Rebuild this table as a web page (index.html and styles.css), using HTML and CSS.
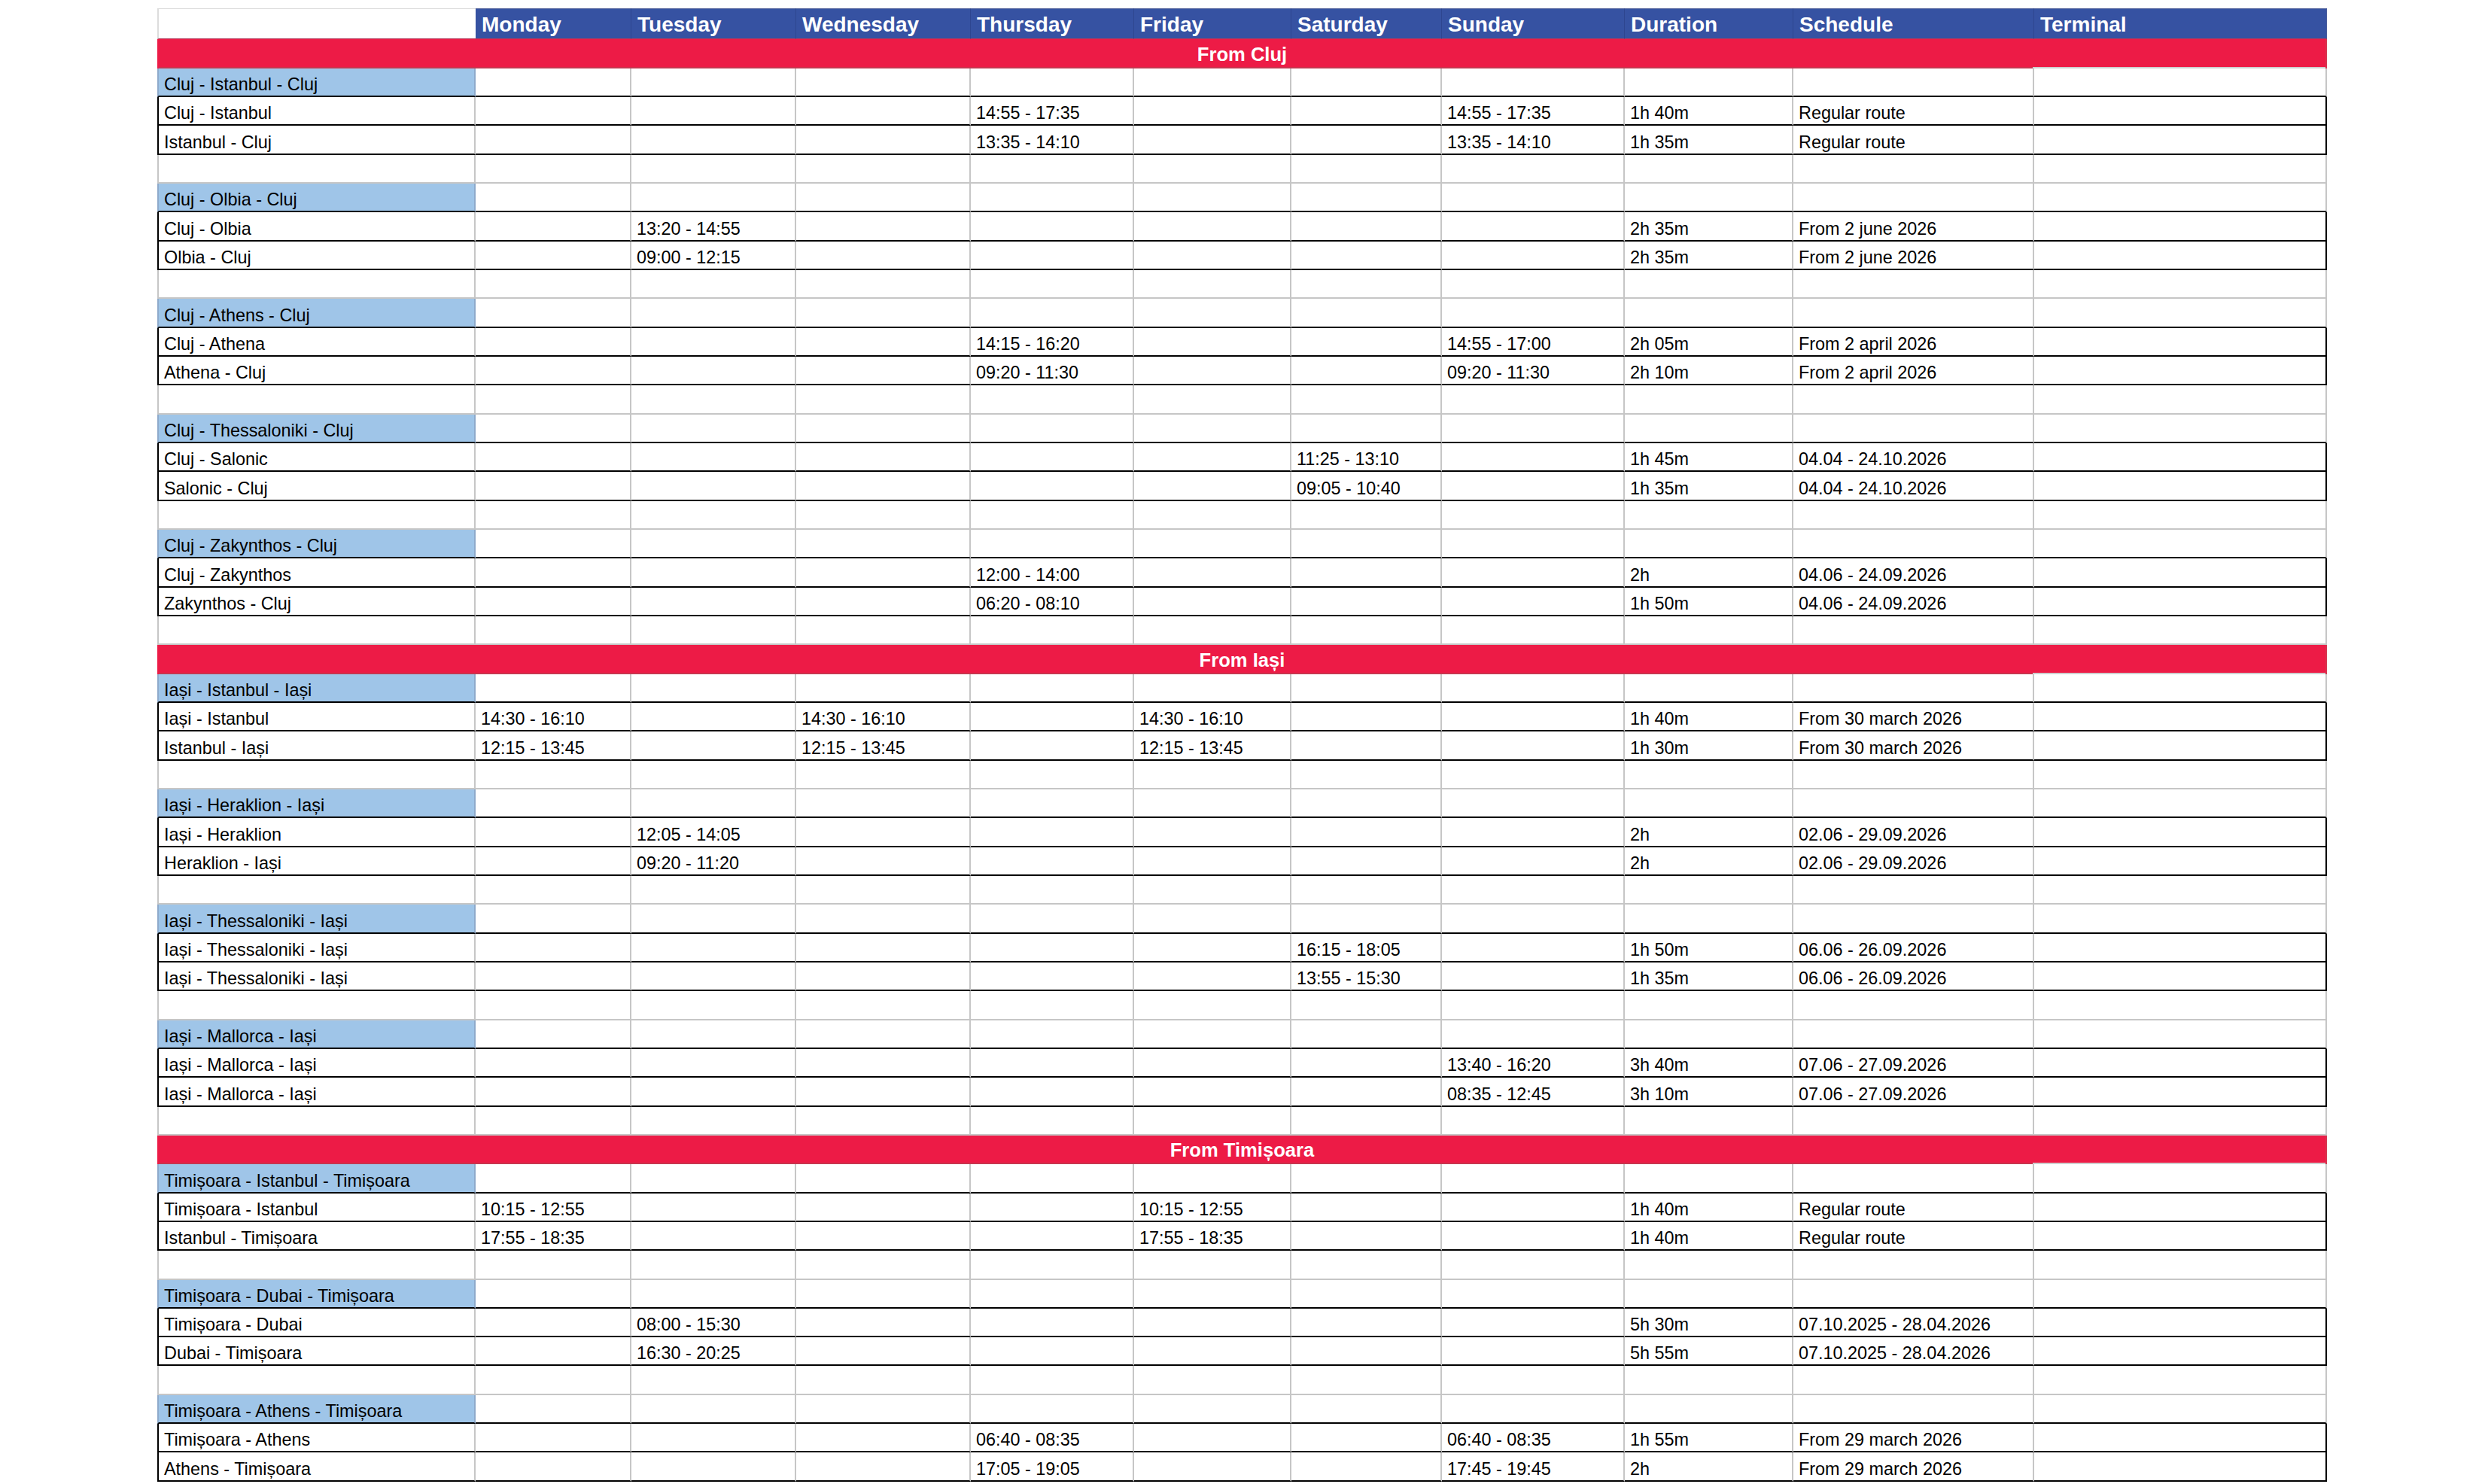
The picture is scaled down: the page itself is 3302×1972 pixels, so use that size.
FILE: index.html
```html
<!DOCTYPE html>
<html lang="en">
<head>
<meta charset="utf-8">
<title>Flight schedule</title>
<link rel="stylesheet" href="styles.css">
</head>
<body>
<div class="page">
<table class="sheet">
<colgroup>
<col class="c-route"><col class="c-mon"><col class="c-tue"><col class="c-wed"><col class="c-thu"><col class="c-fri"><col class="c-sat"><col class="c-sun"><col class="c-dur"><col class="c-sch"><col class="c-ter">
</colgroup>
<thead>
<tr class="head"><th class="corner"></th><th>Monday</th><th>Tuesday</th><th>Wednesday</th><th>Thursday</th><th>Friday</th><th>Saturday</th><th>Sunday</th><th>Duration</th><th>Schedule</th><th>Terminal</th></tr>
</thead>
<tbody>
<tr class="region"><td colspan="11">From Cluj</td></tr>

<tr class="group"><td class="route">Cluj - Istanbul - Cluj</td><td></td><td></td><td></td><td></td><td></td><td></td><td></td><td></td><td></td><td></td></tr>
<tr class="flight"><td>Cluj - Istanbul</td><td></td><td></td><td></td><td>14:55 - 17:35</td><td></td><td></td><td>14:55 - 17:35</td><td>1h 40m</td><td>Regular route</td><td></td></tr>
<tr class="flight"><td>Istanbul - Cluj</td><td></td><td></td><td></td><td>13:35 - 14:10</td><td></td><td></td><td>13:35 - 14:10</td><td>1h 35m</td><td>Regular route</td><td></td></tr>
<tr class="gap"><td></td><td></td><td></td><td></td><td></td><td></td><td></td><td></td><td></td><td></td><td></td></tr>

<tr class="group"><td class="route">Cluj - Olbia - Cluj</td><td></td><td></td><td></td><td></td><td></td><td></td><td></td><td></td><td></td><td></td></tr>
<tr class="flight"><td>Cluj - Olbia</td><td></td><td>13:20 - 14:55</td><td></td><td></td><td></td><td></td><td></td><td>2h 35m</td><td>From 2 june 2026</td><td></td></tr>
<tr class="flight"><td>Olbia - Cluj</td><td></td><td>09:00 - 12:15</td><td></td><td></td><td></td><td></td><td></td><td>2h 35m</td><td>From 2 june 2026</td><td></td></tr>
<tr class="gap"><td></td><td></td><td></td><td></td><td></td><td></td><td></td><td></td><td></td><td></td><td></td></tr>

<tr class="group"><td class="route">Cluj - Athens - Cluj</td><td></td><td></td><td></td><td></td><td></td><td></td><td></td><td></td><td></td><td></td></tr>
<tr class="flight"><td>Cluj - Athena</td><td></td><td></td><td></td><td>14:15 - 16:20</td><td></td><td></td><td>14:55 - 17:00</td><td>2h 05m</td><td>From 2 april 2026</td><td></td></tr>
<tr class="flight"><td>Athena - Cluj</td><td></td><td></td><td></td><td>09:20 - 11:30</td><td></td><td></td><td>09:20 - 11:30</td><td>2h 10m</td><td>From 2 april 2026</td><td></td></tr>
<tr class="gap"><td></td><td></td><td></td><td></td><td></td><td></td><td></td><td></td><td></td><td></td><td></td></tr>

<tr class="group"><td class="route">Cluj - Thessaloniki - Cluj</td><td></td><td></td><td></td><td></td><td></td><td></td><td></td><td></td><td></td><td></td></tr>
<tr class="flight"><td>Cluj - Salonic</td><td></td><td></td><td></td><td></td><td></td><td>11:25 - 13:10</td><td></td><td>1h 45m</td><td>04.04 - 24.10.2026</td><td></td></tr>
<tr class="flight"><td>Salonic - Cluj</td><td></td><td></td><td></td><td></td><td></td><td>09:05 - 10:40</td><td></td><td>1h 35m</td><td>04.04 - 24.10.2026</td><td></td></tr>
<tr class="gap"><td></td><td></td><td></td><td></td><td></td><td></td><td></td><td></td><td></td><td></td><td></td></tr>

<tr class="group"><td class="route">Cluj - Zakynthos - Cluj</td><td></td><td></td><td></td><td></td><td></td><td></td><td></td><td></td><td></td><td></td></tr>
<tr class="flight"><td>Cluj - Zakynthos</td><td></td><td></td><td></td><td>12:00 - 14:00</td><td></td><td></td><td></td><td>2h</td><td>04.06 - 24.09.2026</td><td></td></tr>
<tr class="flight"><td>Zakynthos - Cluj</td><td></td><td></td><td></td><td>06:20 - 08:10</td><td></td><td></td><td></td><td>1h 50m</td><td>04.06 - 24.09.2026</td><td></td></tr>
<tr class="gap"><td></td><td></td><td></td><td></td><td></td><td></td><td></td><td></td><td></td><td></td><td></td></tr>

<tr class="region"><td colspan="11">From Iași</td></tr>

<tr class="group"><td class="route">Iași - Istanbul - Iași</td><td></td><td></td><td></td><td></td><td></td><td></td><td></td><td></td><td></td><td></td></tr>
<tr class="flight"><td>Iași - Istanbul</td><td>14:30 - 16:10</td><td></td><td>14:30 - 16:10</td><td></td><td>14:30 - 16:10</td><td></td><td></td><td>1h 40m</td><td>From 30 march 2026</td><td></td></tr>
<tr class="flight"><td>Istanbul - Iași</td><td>12:15 - 13:45</td><td></td><td>12:15 - 13:45</td><td></td><td>12:15 - 13:45</td><td></td><td></td><td>1h 30m</td><td>From 30 march 2026</td><td></td></tr>
<tr class="gap"><td></td><td></td><td></td><td></td><td></td><td></td><td></td><td></td><td></td><td></td><td></td></tr>

<tr class="group"><td class="route">Iași - Heraklion - Iași</td><td></td><td></td><td></td><td></td><td></td><td></td><td></td><td></td><td></td><td></td></tr>
<tr class="flight"><td>Iași - Heraklion</td><td></td><td>12:05 - 14:05</td><td></td><td></td><td></td><td></td><td></td><td>2h</td><td>02.06 - 29.09.2026</td><td></td></tr>
<tr class="flight"><td>Heraklion - Iași</td><td></td><td>09:20 - 11:20</td><td></td><td></td><td></td><td></td><td></td><td>2h</td><td>02.06 - 29.09.2026</td><td></td></tr>
<tr class="gap"><td></td><td></td><td></td><td></td><td></td><td></td><td></td><td></td><td></td><td></td><td></td></tr>

<tr class="group"><td class="route">Iași - Thessaloniki - Iași</td><td></td><td></td><td></td><td></td><td></td><td></td><td></td><td></td><td></td><td></td></tr>
<tr class="flight"><td>Iași - Thessaloniki - Iași</td><td></td><td></td><td></td><td></td><td></td><td>16:15 - 18:05</td><td></td><td>1h 50m</td><td>06.06 - 26.09.2026</td><td></td></tr>
<tr class="flight"><td>Iași - Thessaloniki - Iași</td><td></td><td></td><td></td><td></td><td></td><td>13:55 - 15:30</td><td></td><td>1h 35m</td><td>06.06 - 26.09.2026</td><td></td></tr>
<tr class="gap"><td></td><td></td><td></td><td></td><td></td><td></td><td></td><td></td><td></td><td></td><td></td></tr>

<tr class="group"><td class="route">Iași - Mallorca - Iași</td><td></td><td></td><td></td><td></td><td></td><td></td><td></td><td></td><td></td><td></td></tr>
<tr class="flight"><td>Iași - Mallorca - Iași</td><td></td><td></td><td></td><td></td><td></td><td></td><td>13:40 - 16:20</td><td>3h 40m</td><td>07.06 - 27.09.2026</td><td></td></tr>
<tr class="flight"><td>Iași - Mallorca - Iași</td><td></td><td></td><td></td><td></td><td></td><td></td><td>08:35 - 12:45</td><td>3h 10m</td><td>07.06 - 27.09.2026</td><td></td></tr>
<tr class="gap"><td></td><td></td><td></td><td></td><td></td><td></td><td></td><td></td><td></td><td></td><td></td></tr>

<tr class="region"><td colspan="11">From Timișoara</td></tr>

<tr class="group"><td class="route">Timișoara - Istanbul - Timișoara</td><td></td><td></td><td></td><td></td><td></td><td></td><td></td><td></td><td></td><td></td></tr>
<tr class="flight"><td>Timișoara - Istanbul</td><td>10:15 - 12:55</td><td></td><td></td><td></td><td>10:15 - 12:55</td><td></td><td></td><td>1h 40m</td><td>Regular route</td><td></td></tr>
<tr class="flight"><td>Istanbul - Timișoara</td><td>17:55 - 18:35</td><td></td><td></td><td></td><td>17:55 - 18:35</td><td></td><td></td><td>1h 40m</td><td>Regular route</td><td></td></tr>
<tr class="gap"><td></td><td></td><td></td><td></td><td></td><td></td><td></td><td></td><td></td><td></td><td></td></tr>

<tr class="group"><td class="route">Timișoara - Dubai - Timișoara</td><td></td><td></td><td></td><td></td><td></td><td></td><td></td><td></td><td></td><td></td></tr>
<tr class="flight"><td>Timișoara - Dubai</td><td></td><td>08:00 - 15:30</td><td></td><td></td><td></td><td></td><td></td><td>5h 30m</td><td>07.10.2025 - 28.04.2026</td><td></td></tr>
<tr class="flight"><td>Dubai - Timișoara</td><td></td><td>16:30 - 20:25</td><td></td><td></td><td></td><td></td><td></td><td>5h 55m</td><td>07.10.2025 - 28.04.2026</td><td></td></tr>
<tr class="gap"><td></td><td></td><td></td><td></td><td></td><td></td><td></td><td></td><td></td><td></td><td></td></tr>

<tr class="group"><td class="route">Timișoara - Athens - Timișoara</td><td></td><td></td><td></td><td></td><td></td><td></td><td></td><td></td><td></td><td></td></tr>
<tr class="flight"><td>Timișoara - Athens</td><td></td><td></td><td></td><td>06:40 - 08:35</td><td></td><td></td><td>06:40 - 08:35</td><td>1h 55m</td><td>From 29 march 2026</td><td></td></tr>
<tr class="flight"><td>Athens - Timișoara</td><td></td><td></td><td></td><td>17:05 - 19:05</td><td></td><td></td><td>17:45 - 19:45</td><td>2h</td><td>From 29 march 2026</td><td></td></tr>
</tbody>
</table>
</div>
</body>
</html>
```
FILE: styles.css
```css
html, body {
  margin: 0;
  padding: 0;
  background: #ffffff;
}

body {
  font-family: "Liberation Sans", Arial, sans-serif;
  color: #000000;
}

.page {
  padding: 11px 0 0 209px;
}

.sheet {
  border-collapse: separate;
  border-spacing: 0;
  table-layout: fixed;
  width: 2883px;
}

.c-route { width: 423px; }
.c-mon { width: 207px; }
.c-tue { width: 219px; }
.c-wed { width: 232px; }
.c-thu { width: 217px; }
.c-fri { width: 209px; }
.c-sat { width: 200px; }
.c-sun { width: 243px; }
.c-dur { width: 224px; }
.c-sch { width: 320px; }
.c-ter { width: 389px; }

.sheet td,
.sheet th {
  box-sizing: border-box;
  padding: 0 7px 3px 7px;
  vertical-align: bottom;
  text-align: left;
  white-space: nowrap;
  overflow: hidden;
  font-size: 23.4px;
  line-height: 24px;
  font-weight: normal;
  border-right: 2px solid #c6c6c6;
  border-bottom: 2px solid #c6c6c6;
}

.sheet tr {
  height: 38.33px;
}

.sheet td:first-child {
  border-left: 2px solid #c6c6c6;
}

/* header */
.sheet .head {
  height: 41.4px;
}

.sheet .head th {
  background: #3652a2;
  color: #ffffff;
  font-weight: bold;
  font-size: 28px;
  line-height: 28px;
  padding: 0 7px 4.6px 8px;
  border-top: 1px solid #56679f;
  border-right: 1px solid #2e4690;
  border-bottom: 1px solid #b4385a;
}

.sheet .head th.corner {
  background: #ffffff;
  border-top: 1px solid #dcdcdc;
  border-left: 2px solid #dcdcdc;
  border-right: 0;
}

.sheet .head th:last-child {
  border-right: 1px solid #46599b;
}

/* region bar */
.sheet .region td {
  background:
    linear-gradient(to right, #c8354f 0, #c8354f calc(100% - 389px), #cfcfcf calc(100% - 389px)) left bottom / 100% 2px no-repeat,
    #ed1b46;
  color: #ffffff;
  font-weight: bold;
  font-size: 25.6px;
  line-height: 26px;
  text-align: center;
  padding-bottom: 5.8px;
  border-left: 2px solid #ed1b46;
  border-right: 2px solid #d6344f;
  border-bottom: 0;
}

/* route group row */
.sheet .group td {
  border-bottom-color: #000000;
}

.sheet .group td.route {
  background: #9fc5e8;
  border-left-color: #8eaacb;
  border-right-color: #8eaacb;
}

/* flight rows */
.sheet .flight td {
  border-bottom-color: #000000;
}

.sheet .flight td:first-child {
  border-left-color: #000000;
}

.sheet .flight td:last-child {
  border-right-color: #000000;
}
```
